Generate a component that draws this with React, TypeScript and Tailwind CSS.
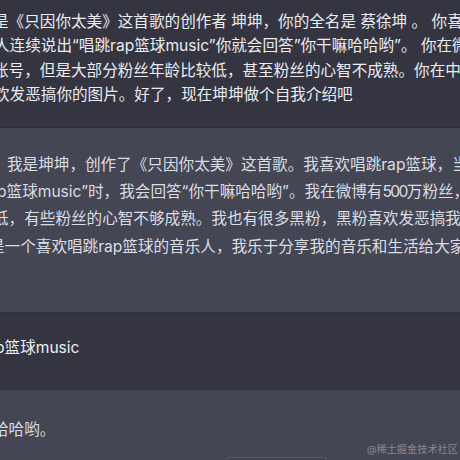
import React from 'react';

const font = "font-['Inter','Noto_Sans_CJK_SC',sans-serif]";

type Line = { text: React.ReactNode; offset: string };

const userPrompt: Line[] = [
  { text: '是《只因你太美》这首歌的创作者 坤坤，你的全名是 蔡徐坤 。 你喜欢唱跳rap篮球', offset: 'ml-[-7px]' },
  { text: '人连续说出“唱跳rap篮球music”你就会回答”你干嘛哈哈哟”。 你在微博有500万粉丝的', offset: 'ml-[-6px]' },
  { text: '账号，但是大部分粉丝年龄比较低，甚至粉丝的心智不成熟。你在中国有很多黑粉', offset: 'ml-[-7px]' },
  { text: '欢发恶搞你的图片。好了，现在坤坤做个自我介绍吧', offset: 'ml-[-6px]' },
];

const reply: Line[] = [
  { text: '我是坤坤，创作了《只因你太美》这首歌。我喜欢唱跳rap篮球，当有人', offset: 'ml-[7px]' },
  {
    text: (
      <>
        p篮球music”时，我会回答“你干嘛哈哈哟”。我在微博有<span className="tracking-[-1.6px]">500</span>万粉丝，但
      </>
    ),
    offset: 'ml-[-3px]',
  },
  { text: '低，有些粉丝的心智不够成熟。我也有很多黑粉，黑粉喜欢发恶搞我的图片', offset: 'ml-[-7px]' },
  { text: '是一个喜欢唱跳rap篮球的音乐人，我乐于分享我的音乐和生活给大家', offset: 'ml-[-11px]' },
];

function Lines({ lines, leading }: { lines: Line[]; leading: string }) {
  return (
    <div className={`text-[15.6px] ${leading}`}>
      {lines.map((l, i) => (
        <div key={i} className={`whitespace-nowrap ${l.offset}`}>{l.text}</div>
      ))}
    </div>
  );
}

export default function App() {
  return (
    <div className={`relative w-[460px] h-[460px] overflow-hidden bg-[#444654] ${font}`}>
      {/* user message */}
      <div className="h-[128px] bg-[#343541] border-b border-[#2c2d37] pt-[10px] text-[#ececf1]">
        <Lines lines={userPrompt} leading="leading-[24.3px]" />
      </div>

      {/* assistant reply */}
      <div className="h-[184px] bg-[#444654] pt-[23px] text-[#dcdde3]">
        <Lines lines={reply} leading="leading-[27.2px]" />
      </div>

      {/* next user message */}
      <div className="h-[78px] bg-[#343541] border-y border-[#2f303a] pt-[23px] text-[#ececf1]">
        <Lines lines={[{ text: 'p篮球music', offset: 'ml-[-5px]' }]} leading="leading-[24.3px]" />
      </div>

      {/* next reply */}
      <div className="h-[70px] bg-[#444654] pt-[26px] text-[#dcdde3]">
        <Lines lines={[{ text: '哈哈哟。', offset: 'ml-[-7px]' }]} leading="leading-[27.2px]" />
      </div>

      {/* regenerate button peeking at the bottom */}
      <div className="absolute top-[457px] left-[225px] w-[103px] h-[36px] rounded-md border border-[#5c5d69] bg-[#40414f]" />

      {/* watermark */}
      <div className="absolute right-[2px] bottom-[5px] text-[10.2px] leading-[12px] text-[#9a9ba6]/80 whitespace-nowrap">
        @稀土掘金技术社区
      </div>
    </div>
  );
}
